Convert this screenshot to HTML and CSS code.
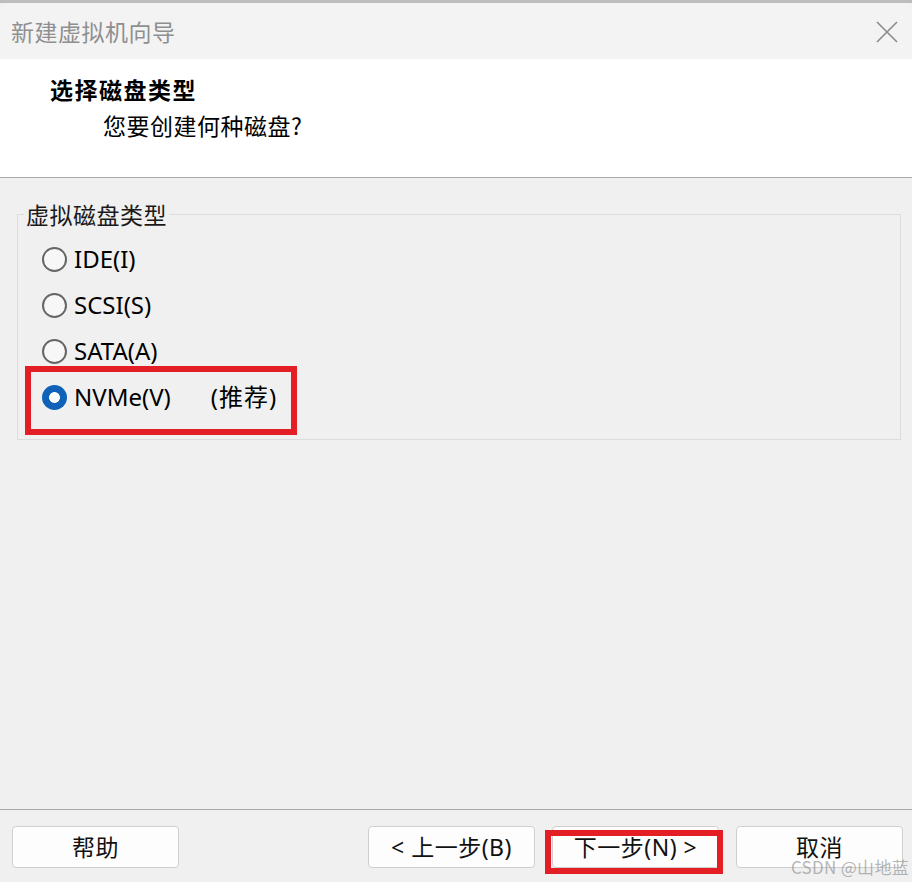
FILE: index.html
```html
<!DOCTYPE html>
<html lang="zh-CN">
<head>
<meta charset="utf-8">
<title>新建虚拟机向导</title>
<link rel="stylesheet" href="styles.css">
</head>
<body>
<div class="topstrip"></div>
<div class="dialog">
  <div class="titlebar">
    <span class="title">新建虚拟机向导</span>
    <svg class="close" width="22" height="22" viewBox="0 0 22 22"><path d="M1 1 L21 21 M21 1 L1 21" stroke="#8a8a8a" stroke-width="1.6" fill="none"/></svg>
  </div>
  <div class="header">
    <div class="h-title">选择磁盘类型</div>
    <div class="h-sub">您要创建何种磁盘?</div>
  </div>
  <div class="content">
    <fieldset class="group">
      <legend>虚拟磁盘类型</legend>
      <div class="row"><span class="radio"></span><span class="label">IDE(I)</span></div>
      <div class="row"><span class="radio"></span><span class="label">SCSI(S)</span></div>
      <div class="row"><span class="radio"></span><span class="label">SATA(A)</span></div>
      <div class="row selected"><span class="radio checked"></span><span class="label">NVMe(V)</span><span class="rec">(推荐)</span><span class="mark mark-row"></span></div>
    </fieldset>
  </div>
  <div class="footer">
    <button class="btn">帮助</button>
    <div class="spacer"></div>
    <button class="btn">&lt; 上一步(B)</button>
    <button class="btn next">下一步(N) &gt;<span class="mark mark-btn"></span></button>
    <button class="btn">取消</button>
  </div>
  <div class="watermark">CSDN @山地蓝</div>
</div>
</body>
</html>
```
FILE: styles.css
```css
* { box-sizing: border-box; }
html, body { margin: 0; padding: 0; }
body {
  width: 912px;
  height: 882px;
  overflow: hidden;
  background: #f0f0f0;
  font-family: "Noto Sans", "Noto Sans CJK SC", sans-serif;
  color: #000;
}
.topstrip {
  height: 3px;
  background: #bdbdbd;
}
.dialog {
  position: relative;
  height: 879px;
  display: flex;
  flex-direction: column;
}
.titlebar {
  height: 56px;
  background: #f3f3f3;
  border-top-left-radius: 8px;
  border-top-right-radius: 8px;
  display: flex;
  align-items: center;
  justify-content: space-between;
  padding: 0 14px 0 11px;
}
.title {
  font-family: "Noto Sans CJK SC", sans-serif;
  font-size: 23px;
  color: #8f8f8f;
  line-height: 30px;
  letter-spacing: 0.5px;
}
.close { display: block; margin-top: 2px; }
.header {
  height: 119px;
  background: #fff;
  border-bottom: 1px solid #a9a9a9;
  padding: 15px 0 0 50px;
}
.h-title {
  font-family: "Noto Sans CJK SC", sans-serif;
  font-weight: bold;
  font-size: 23px;
  line-height: 30px;
  letter-spacing: 1.5px;
}
.h-sub {
  font-family: "Noto Sans CJK SC", sans-serif;
  font-size: 23px;
  line-height: 30px;
  margin: 6px 0 0 53px;
  letter-spacing: 0.5px;
}
.content {
  height: 631px;
  padding: 21px 11px 0 17px;
}
.group {
  margin: 0;
  border: 1px solid #dcdcdc;
  padding: 7px 0 19px 24px;
}
.group legend {
  font-family: "Noto Sans CJK SC", sans-serif;
  font-size: 23px;
  line-height: 30px;
  color: #1a1a1a;
  padding: 0 2px;
  margin-left: -18px;
  letter-spacing: 0.5px;
}
.row {
  position: relative;
  height: 46px;
  display: flex;
  align-items: center;
}
.radio {
  width: 25px;
  height: 25px;
  border-radius: 50%;
  border: 2px solid #666;
  background: #f7f7f7;
  flex: none;
}
.radio.checked {
  border: none;
  background: radial-gradient(circle, #fff 0 5px, #0f62b8 5.8px);
}
.label {
  margin-left: 7px;
  font-size: 24px;
  line-height: 30px;
}
.rec {
  margin-left: 40px;
  font-size: 24px;
  line-height: 30px;
  letter-spacing: 1px;
}
.mark {
  position: absolute;
  border: 6px solid #e31e24;
  pointer-events: none;
}
.mark-row {
  left: -17px;
  top: -8px;
  width: 272px;
  height: 69px;
}
.footer {
  flex: none;
  border-top: 1px solid #a9a9a9;
  padding: 16px 9px 0 12px;
  display: flex;
  align-items: flex-start;
  gap: 17px;
}
.spacer { flex: 1; }
.btn {
  position: relative;
  width: 167px;
  height: 42px;
  background: #fdfdfd;
  border: 1px solid #cfcfcf;
  border-radius: 4px;
  font-family: "Noto Sans", "Noto Sans CJK SC", sans-serif;
  font-size: 23px;
  color: #111;
  padding: 0;
  line-height: 40px;
  letter-spacing: 0.5px;
}
.mark-btn {
  left: -8px;
  top: 3px;
  width: 178px;
  height: 44px;
}
.watermark {
  position: absolute;
  right: 3px;
  bottom: 5px;
  font-family: "Noto Sans CJK SC", sans-serif;
  font-size: 17px;
  color: rgba(150, 150, 150, 0.7);
  line-height: 20px;
  letter-spacing: 0.3px;
}
```
